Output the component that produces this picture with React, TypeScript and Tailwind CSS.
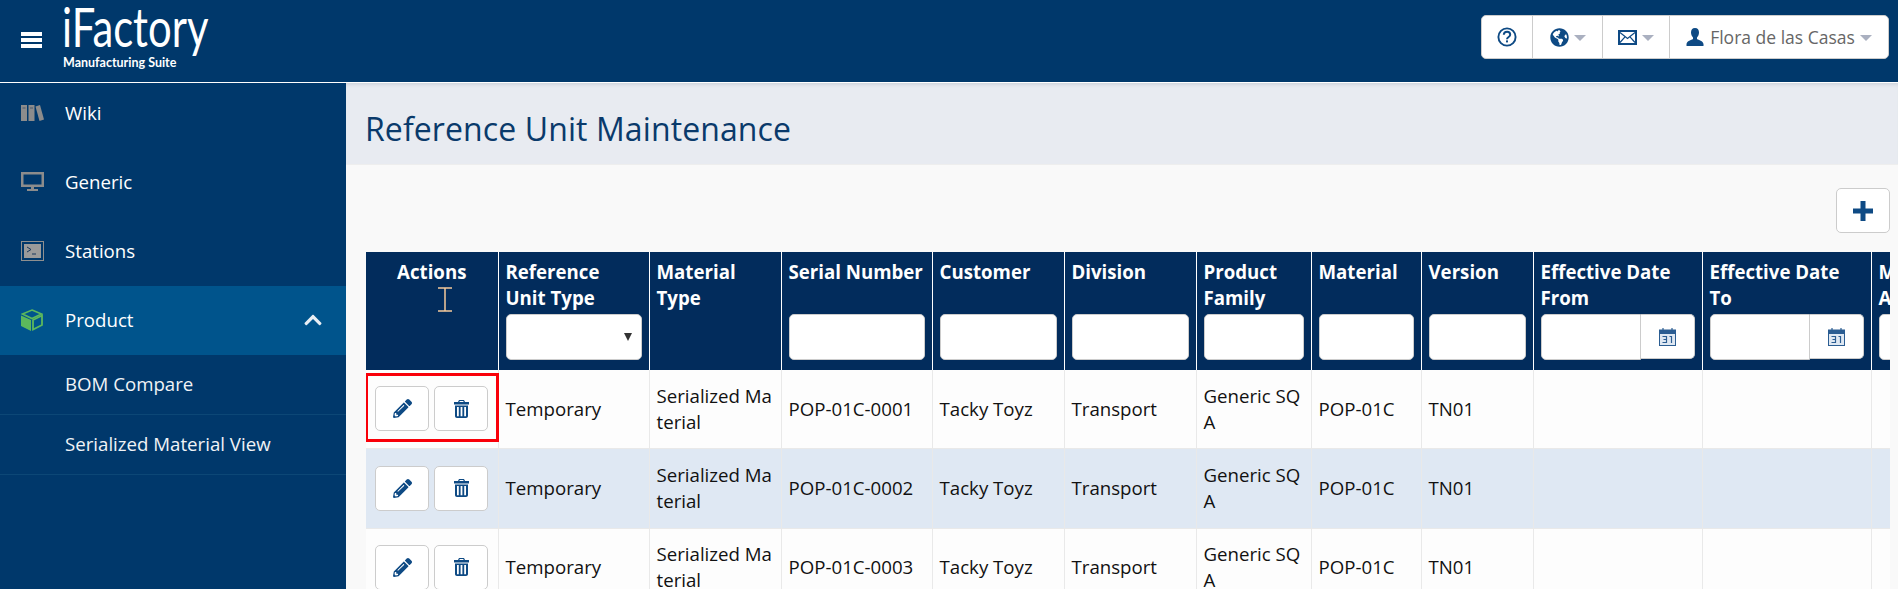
import React from "react";
import { FaGlobeAmericas, FaPencilAlt, FaChevronUp } from "react-icons/fa";

const Menu = () => (
  <svg width="21" height="16" viewBox="0 0 21 16" fill="#fff"><rect width="21" height="4" y="0" /><rect width="21" height="4" y="6" /><rect width="21" height="4" y="12" /></svg>
);
const Books = () => (
  <svg width="23" height="16" viewBox="0 0 23 16"><g fill="#8c8c8c"><rect x="0" y="0" width="6" height="16" /><rect x="7.500" y="0" width="6" height="16" /><path d="M14.500 1.500 19 0l4 14.500-4.500 1.500z" /></g><path d="M1.500 3h3M9 3h3" stroke="#4a5a6e" /></svg>
);
const Monitor = () => (
  <svg width="23" height="19" viewBox="0 0 23 19"><path fillRule="evenodd" fill="#8c8c8c" d="M0 0h23v15H0zM2.500 2.500v10h18v-10z" /><rect x="10" y="15" width="3" height="2" fill="#8c8c8c" /><rect x="6" y="17" width="11" height="2" fill="#8c8c8c" /></svg>
);
const Consolee = () => (
  <svg width="23" height="20" viewBox="0 0 23 20"><rect x=".5" y=".5" width="22" height="19" fill="#00386b" stroke="#8f8f8f" /><rect x="3" y="3" width="17" height="14" fill="#9a9a9a" /><path d="M6 6l4 2.500L6 11" fill="none" stroke="#17375c" /><path d="M11 13h4" stroke="#17375c" /></svg>
);
const Cube = () => (
  <svg width="22" height="22" viewBox="0 0 22 22" fill="#5cb85c"><path d="M11 1 20.500 5 11 9.500 1.500 5z" fill="none" stroke="#5cb85c" strokeWidth="1.600" /><path d="M0 6.500 10 11v11L0 17z" /><path d="M21 6.500 12 11v9.500l9-4.500z" fill="none" stroke="#5cb85c" strokeWidth="1.800" /></svg>
);
const Help = () => (
  <svg width="20" height="20" viewBox="0 0 20 20" fill="none"><circle cx="10" cy="10" r="8.600" stroke="#0e4a84" strokeWidth="1.900" /><path d="M6.800 7.800c.2-4 6.400-4 6.400 0 0 2.200-3.200 2.200-3.200 4.400" stroke="#0e4a84" strokeWidth="2" /><rect x="9" y="13.400" width="2" height="2" fill="#0e4a84" /></svg>
);
const Mail = () => (
  <svg width="19" height="15" viewBox="0 0 19 15"><path fillRule="evenodd" fill="#0e4a84" d="M0 0h19v15H0zM2 2v11h15V2z" /><path d="M2 2.500 9.500 8.500 17 2.500M2 12.500 7 6.800M17 12.500 12 6.800" fill="none" stroke="#0e4a84" strokeWidth="1.200" /></svg>
);
const User = () => (
  <svg width="18" height="18" viewBox="0 0 18 18" fill="#0e4a84"><path d="M9 0c2.800 0 4 2 4 4.500 0 2-1 4-2 5v1.500c1.800 1 6 2 6.500 5V18H.5v-2c.5-3 4.700-4 6.500-5V9.500c-1-1-2-3-2-5C5 2 6.200 0 9 0z" /></svg>
);
const Caret = () => <span className="ml-[5px] mt-[2px] inline-block h-0 w-0 border-x-[6px] border-t-[6px] border-x-transparent border-t-[#aab0c0]" />;
const Trash = () => (
  <svg width="15" height="18" viewBox="0 0 15 18" fill="#0e4a84"><path fillRule="evenodd" d="M5 0h5l1 2h4v2.500H0V2h4zM5.800 1 5.300 2h4.400l-.5-1z" /><path fillRule="evenodd" d="M1 5.500h13V16c0 1.200-.8 2-2 2H3c-1.200 0-2-.8-2-2zM3 7v9.200h1.800V7zM6.600 7v9.200h1.800V7zM10.200 7v9.200H12V7z" /></svg>
);
const Calendar = () => (
  <svg width="17" height="19" viewBox="0 0 17 19" fill="none"><rect x=".5" y="3" width="16" height="15.500" fill="#dfe8f2" stroke="#2b5d92" /><rect x=".5" y="3" width="16" height="4" fill="#2b5d92" /><path d="M4 1v4M13 1v4" stroke="#2b5d92" strokeWidth="1.200" /><path d="M3.500 9.500h4v3h-3 3v3h-4M10.500 9.500h2v6.500" stroke="#2b5d92" strokeWidth="1.200" /></svg>
);
const Plus = () => (
  <svg width="20" height="20" viewBox="0 0 20 20" fill="#0e4a84"><rect x="7.500" y="0" width="5" height="20" /><rect x="0" y="7.500" width="20" height="5" /></svg>
);

const NavItem = ({ icon, label, active }: { icon: React.ReactNode; label: string; active?: boolean }) => (
  <div className={`flex h-[69px] items-center pb-[2px] pl-[21px] text-[18.67px] text-white ${active ? "bg-[#00548c]" : ""}`}>
    <span className="flex w-[44px] items-center">{icon}</span>
    <span>{label}</span>
    {active && <FaChevronUp className="ml-auto mr-[23px] text-[#e8eef4]" size={20} />}
  </div>
);

const SubItem = ({ label }: { label: string }) => (
  <div className="flex h-[60px] items-center border-b border-[#0c4776] pb-[2px] pl-[65px] text-[18.67px] text-[#f0f3f6]">{label}</div>
);

const FilterInput = () => <div className="h-[46px] rounded-[5px] border border-[#ccc] bg-white" />;
const DateInput = () => (
  <div className="flex h-[46px]">
    <div className="flex-1 rounded-l-[5px] border border-[#ccc] bg-white" />
    <div className="flex h-[45px] w-[54px] items-center justify-center rounded-r-[5px] border border-l-0 border-[#ccc] bg-white"><Calendar /></div>
  </div>
);

const cols = [132, 151, 132, 151, 132, 132, 115, 110, 112, 169, 169, 130];
const headers: { t: string; f?: "input" | "select" | "date" }[] = [
  { t: "Reference Unit Type", f: "select" },
  { t: "Material Type" },
  { t: "Serial Number", f: "input" },
  { t: "Customer", f: "input" },
  { t: "Division", f: "input" },
  { t: "Product Family", f: "input" },
  { t: "Material", f: "input" },
  { t: "Version", f: "input" },
  { t: "Effective Date From", f: "date" },
  { t: "Effective Date To", f: "date" },
];

const serials = ["POP-01C-0001", "POP-01C-0002", "POP-01C-0003"];

const ActionBtn = ({ children }: { children: React.ReactNode }) => (
  <button className="flex h-[45px] w-[54px] items-center justify-center rounded-[5px] border border-[#ccc] bg-white">{children}</button>
);

const Row = ({ serial, stripe, first }: { serial: string; stripe: boolean; first: boolean }) => {
  const td = "border-r border-b border-[#e9e9e9] px-[7px] align-middle break-all";
  return (
    <tr className={`${stripe ? "h-[80px] bg-[#dfe8f3]" : "h-[78px] bg-[#fdfdfd]"}`}>
      <td className="relative border-r border-b border-[#e9e9e9] pl-[9px]">
        <div className="flex gap-[5px]">
          <ActionBtn><FaPencilAlt size={19} color="#0e4a84" /></ActionBtn>
          <ActionBtn><Trash /></ActionBtn>
        </div>
        {first && <div className="absolute top-[3px] left-[-1px] bottom-[6px] right-[-1px] border-[3px] border-[#f90009]" />}
      </td>
      <td className={td}>Temporary</td>
      <td className={`${td} leading-[26px]`}>Serialized Material</td>
      <td className={td}>{serial}</td>
      <td className={td}>Tacky Toyz</td>
      <td className={td}>Transport</td>
      <td className={`${td} leading-[26px]`}>Generic SQA</td>
      <td className={td}>POP-01C</td>
      <td className={td}>TN01</td>
      <td className={td}></td>
      <td className={td}></td>
      <td className="border-b border-[#e9e9e9]"></td>
    </tr>
  );
};

export default function App() {
  return (
    <div className="flex h-[589px] w-[1898px] flex-col overflow-hidden bg-[#f9f9f9] font-['Open_Sans',sans-serif] text-[18.67px] text-[#111]">
      <header className="relative z-10 flex h-[83px] shrink-0 items-center border-b border-white bg-[#00386b]">
        <span className="mb-[3px] ml-[21px] flex"><Menu /></span>
        <div className="relative ml-[20px] h-[82px] w-[160px] text-white">
          <span className="absolute left-0 top-0 origin-left scale-x-[0.76] font-['Lato',sans-serif] text-[55px] leading-[53px]">iFactory</span>
          <span className="absolute left-[1px] top-[56px] font-['Lato',sans-serif] text-[12.500px] font-bold leading-[14px] whitespace-nowrap">Manufacturing Suite</span>
        </div>
        <div className="mb-[8px] ml-auto mr-[9px] flex h-[44px] items-stretch rounded-[5px] border border-[#ccc] bg-white text-[#666]">
          <div className="flex w-[51px] items-center justify-center border-r border-[#ccc]"><Help /></div>
          <div className="flex w-[70px] items-center justify-center border-r border-[#ccc]"><FaGlobeAmericas size={19} color="#0e4a84" /><Caret /></div>
          <div className="flex w-[67px] items-center justify-center border-r border-[#ccc]"><Mail /><Caret /></div>
          <div className="flex w-[218px] items-center justify-center"><User /><span className="ml-[6px] text-[17.500px]">Flora de las Casas</span><Caret /></div>
        </div>
      </header>
      <div className="flex min-h-0 flex-1">
        <aside className="-mt-[4px] w-[346px] shrink-0 bg-[#00386b]">
          <NavItem icon={<Books />} label="Wiki" />
          <NavItem icon={<Monitor />} label="Generic" />
          <NavItem icon={<Consolee />} label="Stations" />
          <NavItem icon={<Cube />} label="Product" active />
          <SubItem label="BOM Compare" />
          <SubItem label="Serialized Material View" />
        </aside>
        <main className="min-w-0 flex-1 bg-[#f9f9f9]">
          <div className="flex h-[82px] items-center border-b border-[#eee] bg-[#e8ebf1] pl-[19px] pt-[10px] shadow-[inset_0_4px_4px_-3px_#c5ccd5]">
            <h1 className="text-[32px] leading-none tracking-[0.1px] text-[#0a3a6b]">Reference Unit Maintenance</h1>
          </div>
          <div className="flex justify-end pt-[23px] pr-[8px] pb-[19px]">
            <button className="flex h-[45px] w-[54px] items-center justify-center rounded-[5px] border border-[#ccc] bg-white"><Plus /></button>
          </div>
          <div className="ml-[20px] w-[1524px] overflow-hidden">
            <table className="w-[1535px] table-fixed border-collapse">
              <colgroup>
                {cols.map((w, i) => <col key={i} style={{ width: w }} />)}
              </colgroup>
              <thead>
                <tr className="h-[118px] bg-[#022c5c] align-top text-white">
                  <th className="border-r border-white pt-[7px] text-center font-bold leading-[26px]">
                    Actions
                    <svg className="ml-[72px] mt-[2px] block" width="14" height="25" viewBox="0 0 14 25" fill="none" stroke="#f5c99b" strokeWidth="1.500"><path d="M0 1h14M0 24h14M7 1v23" /></svg>
                  </th>
                  {headers.map((h) => (
                    <th key={h.t} className="border-r border-white px-[7px] pt-[7px] text-left align-top font-bold leading-[26px]">
                      <div className="flex h-[104px] flex-col">
                        <div className="h-[55px] shrink-0">{h.t}</div>
                        {h.f === "input" && <FilterInput />}
                        {h.f === "date" && <DateInput />}
                        {h.f === "select" && (
                          <div className="flex h-[46px] items-center justify-end rounded-[5px] border border-[#ccc] bg-white pr-[9px]">
                            <span className="h-0 w-0 border-x-[4px] border-t-[8px] border-x-transparent border-t-[#333]" />
                          </div>
                        )}
                      </div>
                    </th>
                  ))}
                  <th className="px-[7px] pt-[7px] text-left align-top font-bold leading-[26px] whitespace-nowrap">
                    <div className="h-[55px]">Material<br />Available</div>
                    <FilterInput />
                  </th>
                </tr>
              </thead>
              <tbody>
                {serials.map((s, i) => <Row key={s} serial={s} stripe={i === 1} first={i === 0} />)}
              </tbody>
            </table>
          </div>
        </main>
      </div>
    </div>
  );
}
